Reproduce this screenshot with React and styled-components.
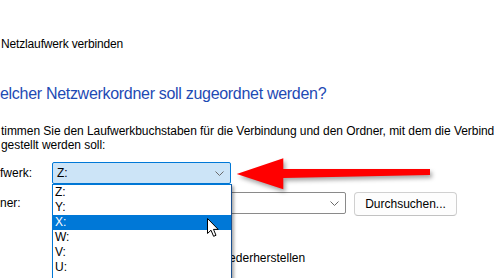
import React from 'react'
import styled, { createGlobalStyle } from 'styled-components'

const GlobalStyle = createGlobalStyle`
  html, body {
    margin: 0;
    padding: 0;
    background: #fff;
    overflow: hidden;
  }
  body {
    font-family: "Liberation Sans", Arial, sans-serif;
    font-size: 12px;
    color: #000;
  }
`

const Page = styled.div`
  position: relative;
  width: 494px;
  height: 278px;
  overflow: hidden;
  padding-top: 36px;
  box-sizing: border-box;
`

const Title = styled.div`
  padding-left: 1px;
  line-height: 16px;
  letter-spacing: -0.15px;
  white-space: nowrap;
`

const Heading = styled.h1`
  margin: 32px 0 0;
  font-size: 16px;
  font-weight: normal;
  line-height: 20px;
  letter-spacing: -0.3px;
  color: #1e4ab4;
  white-space: nowrap;
`

const Description = styled.p`
  margin: 20px 0 0;
  padding-left: 1px;
  line-height: 14px;
  letter-spacing: -0.05px;
  white-space: nowrap;
`

const Form = styled.div`
  margin-top: 10px;
  display: flex;
  flex-direction: column;
  gap: 8px;
`

const Row = styled.div`
  display: flex;
  align-items: flex-start;
`

const Label = styled.div`
  width: 52px;
  height: 22px;
  line-height: 22px;
  flex-shrink: 0;
`

const ComboWrap = styled.div`
  position: relative;
  width: ${p => p.$width}px;
`

const Combo = styled.div`
  height: 22px;
  box-sizing: border-box;
  display: flex;
  align-items: center;
  justify-content: space-between;
  padding: 0 6px 0 4px;
  border: 1px solid ${p => (p.$open ? '#0078d7' : '#8a8a8a')};
  border-radius: 2px;
  background: ${p => (p.$open ? '#cce4f7' : '#fff')};
`

const Chevron = () => (
  <svg width="9" height="5" viewBox="0 0 9 5">
    <path d="M0.5 0.5 L4.5 4.5 L8.5 0.5" fill="none" stroke="#6a6a6a" strokeWidth="1" />
  </svg>
)

const List = styled.ul`
  position: absolute;
  top: 100%;
  left: 0;
  width: 180px;
  margin: 0;
  padding: 0 0 20px;
  list-style: none;
  background: #fff;
  border: 1px solid #0078d7;
  border-right-color: #1a4f8f;
  box-sizing: border-box;
  box-shadow: 2px 2px 3px rgba(0, 0, 0, 0.35);
  z-index: 2;
`

const Item = styled.li`
  height: 15px;
  line-height: 15px;
  padding-left: 2px;
  background: ${p => (p.$active ? '#0078d7' : 'transparent')};
  color: ${p => (p.$active ? '#fff' : '#000')};
`

const Button = styled.button`
  margin-left: 8px;
  width: 103px;
  height: 24px;
  border: 1px solid #d0d0d0;
  border-bottom-color: #c2c2c2;
  border-radius: 4px;
  background: #fdfdfd;
  font-family: inherit;
  font-size: 12px;
  color: #000;
  padding: 0;
`

const CheckRow = styled.div`
  margin-top: 35px;
  padding-left: 52px;
  display: flex;
  align-items: center;
  gap: 6px;
  line-height: 15px;
  white-space: nowrap;
`

const Box = styled.span`
  width: 13px;
  height: 13px;
  box-sizing: border-box;
  border: 1px solid #333;
  border-radius: 2px;
`

const Overlay = styled.svg`
  position: absolute;
  left: ${p => p.$x}px;
  top: ${p => p.$y}px;
  z-index: 3;
  overflow: visible;
`

const drives = ['Z:', 'Y:', 'X:', 'W:', 'V:', 'U:']

export default function App() {
  return (
    <Page>
      <GlobalStyle />
      <Title>Netzlaufwerk verbinden</Title>
      <Heading>elcher Netzwerkordner soll zugeordnet werden?</Heading>
      <Description>
        timmen Sie den Laufwerkbuchstaben für die Verbindung und den Ordner, mit dem die Verbind
        <br />
        gestellt werden soll:
      </Description>
      <Form>
        <Row>
          <Label>fwerk:</Label>
          <ComboWrap $width={179}>
            <Combo $open>
              <span>Z:</span>
              <Chevron />
            </Combo>
            <List>
              {drives.map(d => (
                <Item key={d} $active={d === 'X:'}>{d}</Item>
              ))}
            </List>
          </ComboWrap>
        </Row>
        <Row>
          <Label>ner:</Label>
          <ComboWrap $width={294}>
            <Combo>
              <span />
              <Chevron />
            </Combo>
          </ComboWrap>
          <Button>Durchsuchen...</Button>
        </Row>
      </Form>
      <CheckRow>
        <Box />
        <span>Verbindung bei Anmeldung wiederherstellen</span>
      </CheckRow>

      <Overlay $x={236} $y={158} width="200" height="34" style={{ filter: 'drop-shadow(2px 3px 2px rgba(0,0,0,0.35))' }}>
        <polygon points="0.7,16 47.3,0.3 47.3,11 194,11 194,17 47.3,20 47.3,31.3" fill="#ff0000" />
      </Overlay>

      <Overlay $x={207} $y={218} width="13" height="20" viewBox="0 0 13 20">
        <path
          d="M0.5 0.5 L0.5 15.5 L4 12.2 L6.6 18.3 L9 17.3 L6.5 11.4 L11.2 11.4 Z"
          fill="#fff"
          stroke="#000"
          strokeWidth="1"
          strokeLinejoin="round"
        />
      </Overlay>
    </Page>
  )
}
